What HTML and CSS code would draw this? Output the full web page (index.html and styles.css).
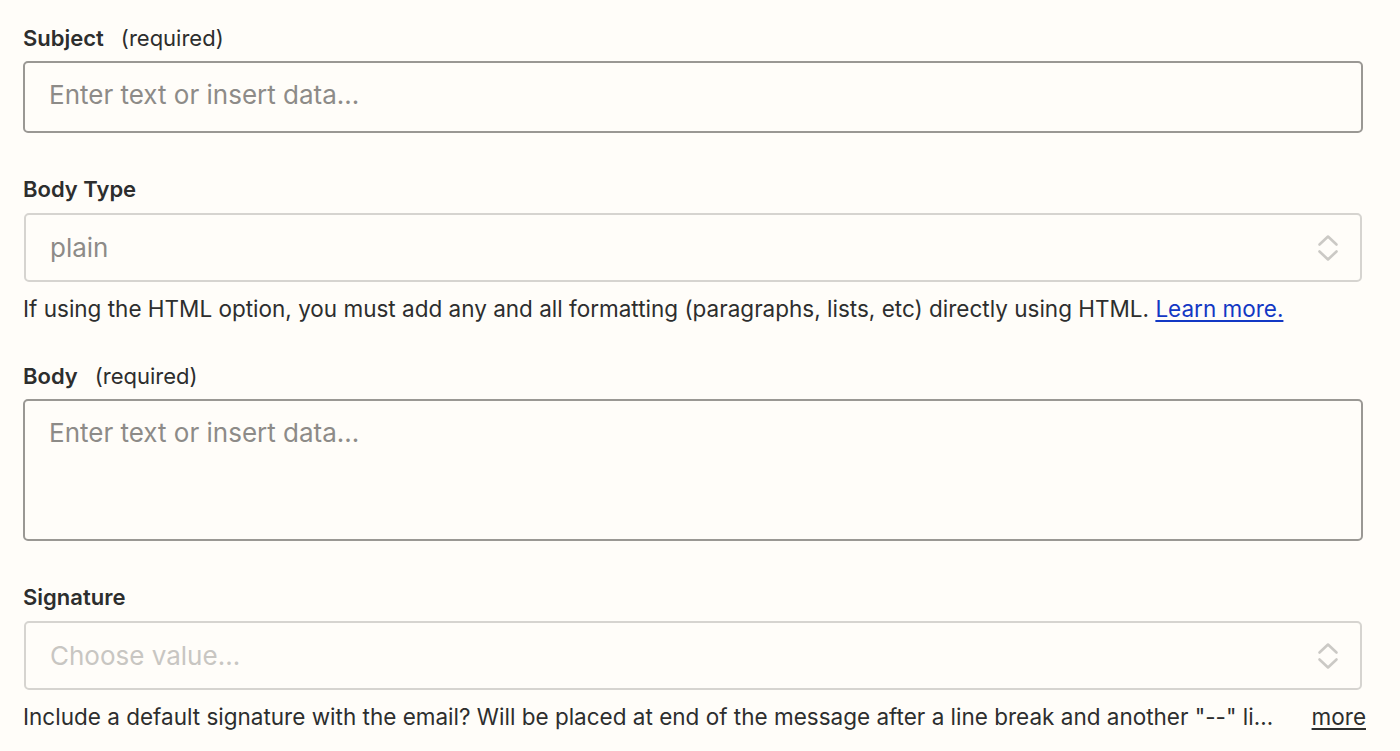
FILE: index.html
```html
<!DOCTYPE html>
<html>
<head>
<meta charset="utf-8">
<link rel="stylesheet" href="styles.css">
</head>
<body>
<div class="form">
  <div class="field first">
    <div class="label"><span class="name">Subject</span><span class="req">(required)</span></div>
    <div class="input single"><span class="ph">Enter text or insert data...</span></div>
  </div>
  <div class="field">
    <div class="label"><span class="name">Body Type</span></div>
    <div class="select">
      <span class="value">plain</span>
      <svg class="chev" width="22" height="30" viewBox="0 0 22 30"><path d="M2.5 11.5 L11 3.5 L19.5 11.5" fill="none" stroke="#cbc9c5" stroke-width="2.6" stroke-linecap="round" stroke-linejoin="round"/><path d="M2.5 18.5 L11 26.5 L19.5 18.5" fill="none" stroke="#cbc9c5" stroke-width="2.6" stroke-linecap="round" stroke-linejoin="round"/></svg>
    </div>
    <div class="help">If using the HTML option, you must add any and all formatting (paragraphs, lists, etc) directly using HTML. <a class="link" href="#">Learn more.</a></div>
  </div>
  <div class="field after-help">
    <div class="label"><span class="name">Body</span><span class="req">(required)</span></div>
    <div class="input multi"><span class="ph">Enter text or insert data...</span></div>
  </div>
  <div class="field">
    <div class="label"><span class="name">Signature</span></div>
    <div class="select">
      <span class="value light">Choose value...</span>
      <svg class="chev" width="22" height="30" viewBox="0 0 22 30"><path d="M2.5 11.5 L11 3.5 L19.5 11.5" fill="none" stroke="#cbc9c5" stroke-width="2.6" stroke-linecap="round" stroke-linejoin="round"/><path d="M2.5 18.5 L11 26.5 L19.5 18.5" fill="none" stroke="#cbc9c5" stroke-width="2.6" stroke-linecap="round" stroke-linejoin="round"/></svg>
    </div>
    <div class="help row"><span class="trunc">Include a default signature with the email? Will be placed at end of the message after a line break and another "--" line. Signatures can be configured in your account settings.</span><a class="more" href="#">more</a></div>
  </div>
</div>
</body>
</html>
```

FILE: styles.css
```css
html, body {
  margin: 0;
  padding: 0;
  background: #fffdf9;
}
body {
  font-family: Inter, "Noto Sans", sans-serif;
  color: #2d2e2e;
}
.form {
  padding-left: 23px;
  width: 1340px;
}
.field {
  margin-top: 42px;
}
.field.first {
  margin-top: 24px;
}
.field.after-help {
  margin-top: 39px;
}
.label {
  font-size: 22px;
  line-height: 28px;
  height: 28px;
}
.name {
  font-weight: 600;
}
.req {
  margin-left: 17px;
  font-weight: 400;
}
.input {
  margin-top: 9px;
  box-sizing: border-box;
  border: 2px solid #9a9894;
  border-radius: 5px;
  background: #fffdf9;
  padding: 0 0 0 24px;
  font-size: 26px;
}
.input.single {
  height: 72px;
  display: flex;
  align-items: center;
  padding-bottom: 5px;
}
.input.multi {
  height: 142px;
  padding-top: 17px;
  line-height: 30px;
}
.ph {
  color: #8d8b88;
}
.select {
  margin: 10px 1px 0 1px;
  box-sizing: border-box;
  height: 69px;
  border: 2px solid #d6d4d0;
  border-radius: 5px;
  display: flex;
  align-items: center;
  justify-content: space-between;
  padding: 0 21px 0 24px;
  font-size: 26px;
}
.value {
  color: #8d8b88;
}
.value.light {
  color: #c8c6c2;
}
.chev {
  display: block;
}
.help {
  margin-top: 13px;
  font-size: 22.5px;
  line-height: 28px;
  color: #2d2e2e;
  white-space: nowrap;
}
.link {
  color: #1338c4;
  text-decoration: underline;
  text-underline-offset: 3px;
}
.row {
  display: flex;
  gap: 27px;
  margin-right: -3px;
}
.trunc {
  flex: 1;
  min-width: 0;
  overflow: hidden;
  text-overflow: ellipsis;
}
.more {
  flex: none;
  color: #2d2e2e;
  text-decoration: underline;
  text-underline-offset: 3px;
}
```
